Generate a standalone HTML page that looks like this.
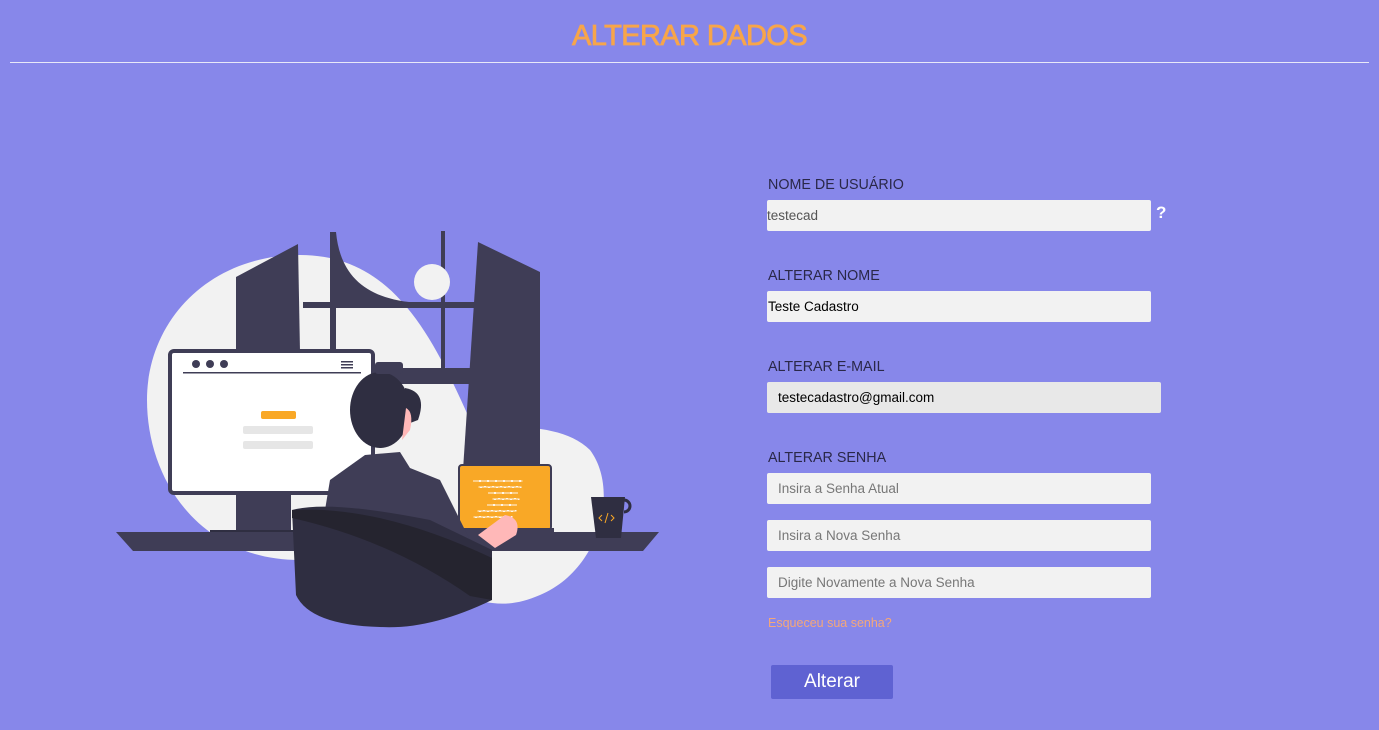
<!DOCTYPE html>
<html><head><meta charset="utf-8"><style>
*{margin:0;padding:0;box-sizing:border-box}
body{width:1379px;height:730px;background:#8787ea;font-family:"Liberation Sans",sans-serif;position:relative;overflow:hidden}
h1{position:absolute;left:0;width:1379px;top:20px;text-align:center;color:#f7a54a;font-size:29px;font-weight:normal;letter-spacing:-0.6px;-webkit-text-stroke:0.8px #f7a54a}
.line{position:absolute;left:10px;width:1359px;top:62px;height:1px;background:#e8e8f8}
.lbl{position:absolute;left:768px;font-size:14.3px;color:#2a2848;letter-spacing:0px}
.in{position:absolute;left:767px;width:384px;height:31px;background:#f2f2f2;border-radius:2px;font-size:13.5px;line-height:31px;padding-left:11px;color:#777}
.q{position:absolute;left:1156px;top:203px;color:#fff;font-weight:bold;font-size:17px}
.link{position:absolute;left:768px;top:616px;font-size:12.5px;color:#f4a77a}
.btn{position:absolute;left:771px;top:665px;width:122px;height:34px;background:#5f62d2;color:#fff;font-size:19px;text-align:center;line-height:34px;border-radius:2px}
svg{position:absolute;left:0;top:0}
</style></head><body>
<h1>ALTERAR DADOS</h1>
<div class="line"></div>
<svg width="700" height="730" viewBox="0 0 700 730">
<path d="M300 255 C390 255 430 330 470 420 C500 430 560 420 590 450 C620 490 600 570 540 595 C510 608 490 605 460 595 L300 560 C200 560 147 480 147 400 C147 320 210 255 300 255 Z" fill="#f2f2f2"/>
<path d="M236 277 L298 244 L300 352 L236 352 Z" fill="#3f3d56"/>
<path d="M330 232 L336 232 C340 275 365 300 420 303 L336 307 L336 360 L330 360 Z" fill="#3f3d56"/>
<rect x="303" y="302" width="172" height="6" fill="#3f3d56"/>
<rect x="441" y="231" width="4" height="150" fill="#3f3d56"/>
<circle cx="432" cy="282" r="18" fill="#f2f2f2"/>
<path d="M478 242 L540 272 L540 470 L463 470 Z" fill="#3f3d56"/>
<rect x="375" y="368" width="100" height="16" fill="#3f3d56"/>
<rect x="170" y="351" width="203" height="142" rx="4" fill="#fff" stroke="#3f3d56" stroke-width="4"/>
<circle cx="196" cy="364" r="4" fill="#3f3d56"/><circle cx="210" cy="364" r="4" fill="#3f3d56"/><circle cx="224" cy="364" r="4" fill="#3f3d56"/>
<rect x="341" y="361" width="12" height="1.5" fill="#3f3d56"/><rect x="341" y="364" width="12" height="1.5" fill="#3f3d56"/><rect x="341" y="367" width="12" height="1.5" fill="#3f3d56"/>
<rect x="183" y="372" width="178" height="1.5" fill="#3f3d56"/>
<rect x="261" y="411" width="35" height="8" rx="2" fill="#f9a826"/>
<rect x="243" y="426" width="70" height="8" rx="2" fill="#e6e6e6"/>
<rect x="243" y="441" width="70" height="8" rx="2" fill="#e6e6e6"/>
<rect x="236" y="493" width="55" height="40" fill="#3f3d56"/>
<rect x="210" y="530" width="100" height="12" fill="#2f2e41"/>
<path d="M116 532 L659 532 L643 551 L133 551 Z" fill="#3f3d56"/>
<rect x="459" y="465" width="92" height="65" rx="3" fill="#f9a826" stroke="#3f3d56" stroke-width="2"/>
<g fill="#fff" opacity="0.9" stroke="#f9a826" stroke-width="1" stroke-dasharray="6 2"><rect x="473" y="480" width="50" height="2"/><rect x="478" y="486" width="44" height="2"/><rect x="488" y="492" width="30" height="2"/><rect x="492" y="498" width="28" height="2"/><rect x="487" y="504" width="30" height="2"/><rect x="477" y="510" width="40" height="2"/><rect x="473" y="516" width="40" height="2"/></g>
<rect x="462" y="528" width="92" height="8" fill="#3f3d56"/>
<path d="M591 497 L625 497 L621 538 L596 538 Z" fill="#2f2e41"/>
<path d="M624 500 a6 6 0 1 1 0 12" fill="none" stroke="#2f2e41" stroke-width="3"/>
<path d="M602 515 l-3 3 3 3 M611 515 l3 3 -3 3 M608 513 l-3 10" stroke="#f9a826" fill="none" stroke-width="1"/>
<path d="M330 480 L365 455 L400 452 L410 468 L440 480 L470 540 L320 540 Z" fill="#3f3d56"/>
<path d="M478 535 L505 515 Q522 518 516 535 L495 548 Z" fill="#ffb8b8"/>
<ellipse cx="380" cy="410" rx="30" ry="38" fill="#2f2e41"/>
<path d="M405 388 Q428 392 418 420 L405 425 Z" fill="#2f2e41"/>
<path d="M406 408 Q414 412 410 430 L402 440 Z" fill="#ffb8b8"/>
<rect x="375" y="362" width="28" height="12" rx="3" fill="#3f3d56"/>
<path d="M292 510 Q330 500 430 520 L492 550 L492 600 Q430 630 380 627 Q310 625 296 595 Z" fill="#2f2e41"/>
<path d="M292 510 Q380 505 492 558 L492 600 L470 596 Q390 540 292 518 Z" fill="#25242f"/>
</svg>
<div class="lbl" style="top:177px">NOME DE USUÁRIO</div>
<div class="in" style="top:200px;padding-left:0;color:#555">testecad</div>
<div class="q">?</div>
<div class="lbl" style="top:268px">ALTERAR NOME</div>
<div class="in" style="top:291px;padding-left:1px;color:#000">Teste Cadastro</div>
<div class="lbl" style="top:359px">ALTERAR E-MAIL</div>
<div class="in" style="top:382px;width:394px;background:#e8e8e8;color:#000">testecadastro@gmail.com</div>
<div class="lbl" style="top:450px">ALTERAR SENHA</div>
<div class="in" style="top:473px">Insira a Senha Atual</div>
<div class="in" style="top:520px">Insira a Nova Senha</div>
<div class="in" style="top:567px">Digite Novamente a Nova Senha</div>
<div class="link">Esqueceu sua senha?</div>
<div class="btn">Alterar</div>
</body></html>
